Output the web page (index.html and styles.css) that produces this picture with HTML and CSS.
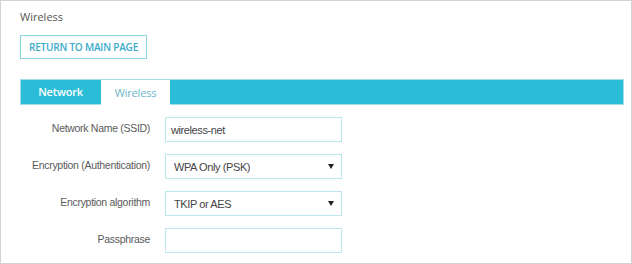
FILE: index.html
```html
<!DOCTYPE html>
<html lang="en">
<head>
    <meta charset="UTF-8">
    <meta name="viewport" content="width=device-width, initial-scale=1.0">
    <title>Wireless</title>
    <link rel="stylesheet" href="styles.css">
</head>
<body>

    <div class="frame">
        <div class="page-title">Wireless</div>
        <button class="return-btn">RETURN TO MAIN PAGE</button>

        <div class="tabs">
            <div class="tab">Network</div>
            <div class="tab active">Wireless</div>
        </div>

        <div class="form">
            <label for="ssid">Network Name (SSID)</label>
            <input type="text" id="ssid" value="wireless-net">

            <label for="auth">Encryption (Authentication)</label>
            <div class="select-wrap">
                <select id="auth">
                    <option>WPA Only (PSK)</option>
                    <option>WPA2 Only (PSK)</option>
                    <option>WPA/WPA2 (PSK)</option>
                </select>
            </div>

            <label for="algo">Encryption algorithm</label>
            <div class="select-wrap">
                <select id="algo">
                    <option>TKIP or AES</option>
                    <option>AES</option>
                    <option>TKIP</option>
                </select>
            </div>

            <label for="pass">Passphrase</label>
            <input type="password" id="pass">
        </div>
    </div>

</body>
</html>
```

FILE: styles.css
```css
body {
    margin: 0;
    background: white;
    font-family: "Liberation Sans", Arial, sans-serif;
}
.frame {
    width: 632px;
    height: 264px;
    box-sizing: border-box;
    border: 1px solid #d2d2d2;
    padding: 8px 7px 0 19px;
}
.page-title {
    font-family: "Open Sans", sans-serif;
    font-size: 11px;
    color: #555;
    line-height: 16px;
}
.return-btn {
    display: block;
    margin-top: 10px;
    height: 24px;
    width: 127px;
    padding: 0;
    background: white;
    border: 1px solid #8fd6e3;
    color: #3aabcb;
    font-family: "Open Sans", sans-serif;
    font-size: 10px;
    font-weight: 600;
    letter-spacing: -0.2px;
    cursor: pointer;
}
.tabs {
    display: flex;
    margin-top: 20px;
    height: 26px;
    box-sizing: border-box;
    background-color: #2bbdd7;
    border: 1px solid #9fdfea;
}
.tab {
    width: 79px;
    text-align: center;
    line-height: 24px;
    font-family: "Open Sans", sans-serif;
    font-size: 11px;
    font-weight: 600;
    letter-spacing: -0.2px;
    color: white;
}
.tab.active {
    width: 69px;
    margin-left: 1px;
    margin-top: -1px;
    height: 26px;
    background: white;
    border-top: 1px solid #9fdfea;
    box-sizing: border-box;
    font-weight: normal;
    color: #6cb5ca;
    line-height: 26px;
}
.form {
    display: grid;
    grid-template-columns: 129px 177px;
    column-gap: 15px;
    row-gap: 12px;
    margin-top: 12px;
    margin-left: 1px;
}
.form label {
    text-align: right;
    white-space: nowrap;
    font-size: 10.5px;
    letter-spacing: -0.3px;
    color: #5a5a5a;
    line-height: 22px;
}
.form input, .form select {
    width: 177px;
    height: 25px;
    box-sizing: border-box;
    border: 1px solid #bde6ee;
    border-radius: 0;
    padding: 0 5px;
    font-family: "Liberation Sans", Arial, sans-serif;
    font-size: 11px;
    letter-spacing: -0.4px;
    color: #444;
    background: white;
    outline: none;
}
.form select {
    appearance: none;
    -webkit-appearance: none;
    padding-left: 8px;
}
.select-wrap {
    position: relative;
    width: 177px;
}
.select-wrap::after {
    content: "";
    position: absolute;
    right: 8px;
    top: 10px;
    border-left: 3px solid transparent;
    border-right: 3px solid transparent;
    border-top: 5px solid #222;
    pointer-events: none;
}
```
